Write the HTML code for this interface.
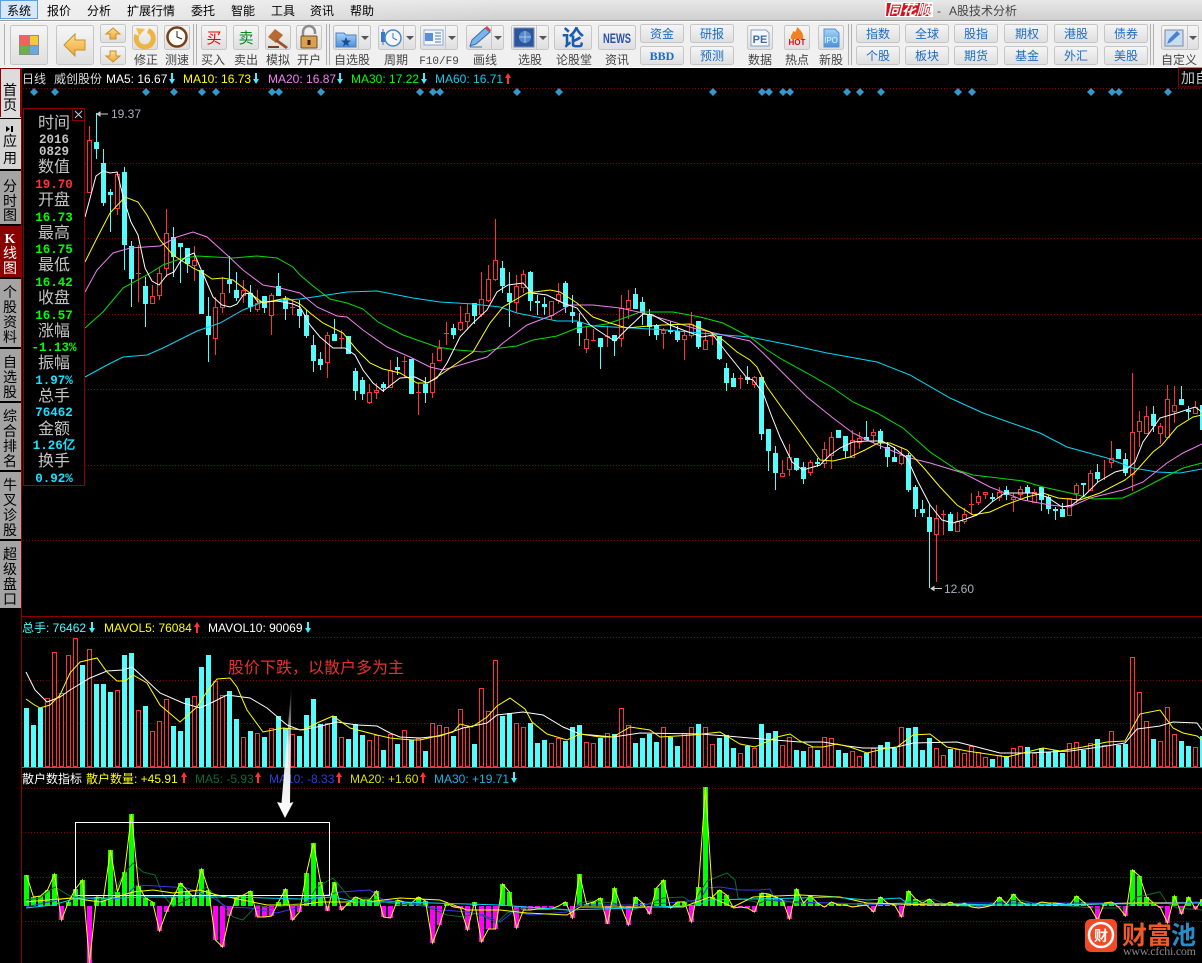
<!DOCTYPE html>
<html lang="zh"><head><meta charset="utf-8"><title>A股技术分析</title>
<style>
html,body{margin:0;padding:0;background:#000;width:1202px;height:963px;overflow:hidden}
svg{display:block}
text{font-family:"Liberation Sans","WenQuanYi Zen Hei","Noto Sans CJK SC",sans-serif;font-size:12px}
.m{fill:#000;font-size:12px}
.l{fill:#444;font-size:12px;text-anchor:middle}
.b{fill:#1a6cc4;font-size:12px;text-anchor:middle}
.tab{fill:#000;font-size:14px;text-anchor:middle}
.k{fill:#c4c4c4;font-size:16px;text-anchor:middle}
.v{font-family:"Liberation Mono","WenQuanYi Zen Hei",monospace;font-weight:bold;font-size:12.5px;text-anchor:middle}
.g{fill:none;stroke:#8c0000;stroke-dasharray:1 2}
.btn{fill:url(#bg);stroke:#c6c6c6}
.ln{fill:none;stroke-width:1}
</style></head><body>
<svg xmlns="http://www.w3.org/2000/svg" width="1202" height="963" viewBox="0 0 1202 963">
<defs>
<linearGradient id="bg" x1="0" y1="0" x2="0" y2="1"><stop offset="0" stop-color="#f6f6f6"/><stop offset="1" stop-color="#dedede"/></linearGradient>
<linearGradient id="mb" x1="0" y1="0" x2="0" y2="1"><stop offset="0" stop-color="#e8e8e8"/><stop offset="1" stop-color="#cfcfcf"/></linearGradient>
<linearGradient id="mh" x1="0" y1="0" x2="1" y2="0"><stop offset="0" stop-color="#f2f2f2"/><stop offset="1" stop-color="#f2f2f2" stop-opacity="0"/></linearGradient>
<linearGradient id="ar" x1="0" y1="0" x2="0" y2="1"><stop offset="0" stop-color="#fff" stop-opacity="0"/><stop offset=".45" stop-color="#fff" stop-opacity=".85"/><stop offset="1" stop-color="#fff"/></linearGradient>
<linearGradient id="gold" x1="0" y1="0" x2="0" y2="1"><stop offset="0" stop-color="#fbe08a"/><stop offset="1" stop-color="#eea63a"/></linearGradient>
<linearGradient id="blue" x1="0" y1="0" x2="0" y2="1"><stop offset="0" stop-color="#a8d4f8"/><stop offset="1" stop-color="#4a90dc"/></linearGradient>
</defs>
<rect width="1202" height="963" fill="#000"/>

<!-- menu bar -->
<rect x="0" y="0" width="1202" height="20" fill="url(#mb)"/>
<rect x="0" y="0" width="500" height="20" fill="url(#mh)"/>
<rect x=".5" y=".5" width="37" height="18" fill="#d8e8f8" stroke="#5aa0e0"/>
<text x="7" y="15" class="m" style="font-size:12px">系统</text>
<text x="47" y="15" class="m">报价</text>
<text x="87" y="15" class="m">分析</text>
<text x="127" y="15" class="m">扩展行情</text>
<text x="191" y="15" class="m">委托</text>
<text x="231" y="15" class="m">智能</text>
<text x="271" y="15" class="m">工具</text>
<text x="310" y="15" class="m">资讯</text>
<text x="350" y="15" class="m">帮助</text>
<rect x="885" y="2" width="48" height="15" fill="#fff"/>
<path d="M887 3h45l-2 13h-44z" fill="#d8101c"/>
<text x="909" y="15" text-anchor="middle" style="font-size:15px;font-weight:bold;font-style:italic;fill:#fff" textLength="44" lengthAdjust="spacingAndGlyphs">同花顺</text>
<text x="937" y="15" style="fill:#444">-</text>
<text x="949" y="15" style="fill:#444">A股技术分析</text>

<!-- toolbar -->
<rect x="0" y="20" width="1202" height="48" fill="#f0f0f0"/>
<path d="M0 20.5H1202" stroke="#9c9c9c"/><path d="M0 21.5H1202" stroke="#fff"/>
<path d="M0 67.5H1202" stroke="#fff"/>
<g fill="none" stroke="#b0b0b0"><path d="M4.5 24V65M193.5 24V65M196.5 24V65M326.5 24V65M329.5 24V65M848.5 24V65M851.5 24V65M1150.5 24V65M1153.5 24V65"/></g>

<rect class="btn" x="10.5" y="25.5" width="37" height="39" rx="2"/>
<rect x="19" y="35" width="20" height="20" fill="#8c8c8c"/>
<rect x="20" y="36" width="9" height="9" fill="#f4605c"/><rect x="30" y="36" width="8" height="9" fill="#f6c93e"/><rect x="20" y="46" width="9" height="8" fill="#6cb04e"/><rect x="30" y="46" width="8" height="8" fill="#6aa8e4"/>

<rect class="btn" x="56.5" y="25.5" width="37" height="39" rx="2"/>
<path d="M64 45l11-11v6h10v10H75v6z" fill="url(#gold)" stroke="#c8902c"/>

<rect class="btn" x="100.5" y="24.5" width="25" height="18" rx="2"/>
<path d="M113 28l7 6h-4v5h-6v-5h-4z" fill="url(#gold)" stroke="#c8902c"/>
<rect class="btn" x="100.5" y="46.5" width="25" height="18" rx="2"/>
<path d="M113 62l7-6h-4v-5h-6v5h-4z" fill="url(#gold)" stroke="#c8902c"/>

<rect class="btn" x="132.5" y="25.5" width="25" height="24" rx="2"/>
<path d="M148 30.500A8.500 8.500 0 1 1 137 35" fill="none" stroke="#eeb442" stroke-width="5"/><path d="M136 28l9 1-6 7z" fill="#f2c050"/>
<rect class="btn" x="164.5" y="25.500" width="25" height="24" rx="2"/>
<circle cx="177" cy="37" r="9.500" fill="#fff" stroke="#7a3e14" stroke-width="2.500"/><path d="M177 31v6l5 2" fill="none" stroke="#222"/>
<text x="146" y="64" class="l">修正</text><text x="177" y="64" class="l">测速</text>

<rect class="btn" x="201.500" y="25.500" width="25" height="24" rx="2"/>
<text x="214" y="43" text-anchor="middle" style="fill:#f00000;font-size:15px">买</text>
<rect class="btn" x="233.500" y="25.500" width="25" height="24" rx="2"/>
<text x="246" y="43" text-anchor="middle" style="fill:#008a20;font-size:15px">卖</text>
<rect class="btn" x="265.500" y="25.500" width="25" height="24" rx="2"/>
<path d="M268 37l7-8 8 6-7 8z" fill="#b86a34"/><path d="M277 39l11 8-2 2-11-8z" fill="#9a5426"/><rect x="268" y="46" width="11" height="2" fill="#8a3a10"/>
<rect class="btn" x="296.500" y="25.500" width="25" height="24" rx="2"/>
<path d="M303 37v-5a6 6 0 0 1 12 0v2" fill="none" stroke="#8c8c8c" stroke-width="2.500"/><rect x="301" y="36" width="16" height="12" rx="1" fill="#d8a050" stroke="#7a5020"/><rect x="307.500" y="40" width="3" height="5" fill="#3c2410"/>
<text x="213" y="64" class="l">买入</text><text x="246" y="64" class="l">卖出</text><text x="278" y="64" class="l">模拟</text><text x="309" y="64" class="l">开户</text>

<!-- dropdown buttons -->
<rect class="btn" x="333.500" y="25.500" width="37" height="24" rx="2"/><path d="M358.500 26V49" stroke="#c6c6c6"/><path d="M361 36h8l-4 4z" fill="#555"/>
<path d="M336 33h8l2 2h10v12h-20z" fill="url(#blue)" stroke="#4a80c0"/><path d="M346 37l1.500 3.500h3.500l-3 2.500 1 3.500-3-2-3 2 1-3.500-3-2.500h3.500z" fill="#1e4c90"/>
<text x="352" y="64" class="l">自选股</text>

<rect class="btn" x="378.500" y="25.500" width="37" height="24" rx="2"/><path d="M403.500 26V49" stroke="#c6c6c6"/><path d="M406 36h8l-4 4z" fill="#555"/>
<rect x="381" y="32" width="4" height="10" fill="#3a78c8"/><path d="M383 29v16" stroke="#3a78c8"/><circle cx="393" cy="38" r="8" fill="#f4f8fc" stroke="#4a88c8" stroke-width="1.500"/><path d="M393 33v5l4 2" fill="none" stroke="#3a78c8"/>
<text x="396" y="64" class="l">周期</text>

<rect class="btn" x="420.500" y="25.500" width="37" height="24" rx="2"/><path d="M445.500 26V49" stroke="#c6c6c6"/><path d="M448 36h8l-4 4z" fill="#555"/>
<rect x="424" y="30" width="19" height="15" fill="#f4f8fc" stroke="#8aa8d0"/><rect x="425" y="33" width="8" height="8" fill="#5a90d8"/><path d="M435 33h6M435 36h6M435 39h6M435 42h6" stroke="#5a78a8"/>
<text x="439" y="64" class="l" style="font-family:'Liberation Mono',monospace;font-size:11px">F10/F9</text>

<rect class="btn" x="466.500" y="25.500" width="37" height="24" rx="2"/><path d="M491.500 26V49" stroke="#c6c6c6"/><path d="M494 36h8l-4 4z" fill="#555"/>
<path d="M470 46l2-6 13-12 5 4-14 12z" fill="#7ab4ec" stroke="#3a6ca8"/><path d="M485 28l5 4 1-2-4-4z" fill="#e04040"/><path d="M470 47h12" stroke="#3a78c0"/>
<text x="485" y="64" class="l">画线</text>

<rect class="btn" x="511.500" y="25.500" width="37" height="24" rx="2"/><path d="M536.500 26V49" stroke="#c6c6c6"/><path d="M539 36h8l-4 4z" fill="#555"/>
<rect x="514" y="28" width="20" height="19" fill="#2a56a0" stroke="#7a8aa8"/><circle cx="525" cy="37" r="6" fill="#5a88c8"/><path d="M525 31v12M519 37h12" stroke="#a8c8e8"/>
<text x="530" y="64" class="l">选股</text>

<rect class="btn" x="554.500" y="25.500" width="37" height="24" rx="2"/>
<text x="573" y="46" text-anchor="middle" style="fill:#1a5cb0;font-size:22px;font-weight:bold">论</text>
<text x="574" y="64" class="l">论股堂</text>

<rect class="btn" x="598.500" y="25.500" width="37" height="24" rx="2"/>
<text x="617" y="43" text-anchor="middle" style="fill:#2a50a8;font-size:14px;font-weight:bold" textLength="28" lengthAdjust="spacingAndGlyphs">NEWS</text>
<text x="617" y="64" class="l">资讯</text>

<rect class="btn" x="640.500" y="24.500" width="43" height="18" rx="2"/><text x="662" y="38" class="b">资金</text>
<rect class="btn" x="640.500" y="46.500" width="43" height="18" rx="2"/><text x="662" y="60" class="b" style="font-family:'Liberation Serif',serif;font-weight:bold">BBD</text>
<rect class="btn" x="690.500" y="24.500" width="43" height="18" rx="2"/><text x="712" y="38" class="b">研报</text>
<rect class="btn" x="690.500" y="46.500" width="43" height="18" rx="2"/><text x="712" y="60" class="b">预测</text>

<rect class="btn" x="747.500" y="25.500" width="25" height="24" rx="2"/>
<path d="M751 30h15l3 3v13h-18z" fill="#f4f8fc" stroke="#8aa0b8"/><text x="760" y="43" text-anchor="middle" style="fill:#3a6ca8;font-size:11px;font-weight:bold">PE</text>
<text x="760" y="64" class="l">数据</text>
<rect class="btn" x="784.500" y="25.500" width="25" height="24" rx="2"/>
<path d="M797 27c5 4 7 8 6 12h-12c-1-4 2-5 2-8 2 1 3 2 4-4z" fill="#f08020"/><text x="797" y="45" text-anchor="middle" style="fill:#d81010;font-size:8px;font-weight:bold">HOT</text>
<text x="797" y="64" class="l">热点</text>
<rect class="btn" x="818.500" y="25.500" width="25" height="24" rx="2"/>
<path d="M824 29h11l4 4v14h-15z" fill="url(#blue)" stroke="#5a90d0"/><text x="831" y="43" text-anchor="middle" style="fill:#dff;font-size:8px">IPO</text>
<text x="831" y="64" class="l">新股</text>

<rect class="btn" x="856.500" y="24.500" width="43" height="18" rx="2"/><text x="878" y="38" class="b">指数</text>
<rect class="btn" x="856.500" y="46.500" width="43" height="18" rx="2"/><text x="878" y="60" class="b">个股</text>
<rect class="btn" x="905.500" y="24.500" width="43" height="18" rx="2"/><text x="927" y="38" class="b">全球</text>
<rect class="btn" x="905.500" y="46.500" width="43" height="18" rx="2"/><text x="927" y="60" class="b">板块</text>
<rect class="btn" x="954.500" y="24.500" width="43" height="18" rx="2"/><text x="976" y="38" class="b">股指</text>
<rect class="btn" x="954.500" y="46.500" width="43" height="18" rx="2"/><text x="976" y="60" class="b">期货</text>
<rect class="btn" x="1004.500" y="24.500" width="43" height="18" rx="2"/><text x="1027" y="38" class="b">期权</text>
<rect class="btn" x="1004.500" y="46.500" width="43" height="18" rx="2"/><text x="1027" y="60" class="b">基金</text>
<rect class="btn" x="1054.500" y="24.500" width="43" height="18" rx="2"/><text x="1076" y="38" class="b">港股</text>
<rect class="btn" x="1054.500" y="46.500" width="43" height="18" rx="2"/><text x="1076" y="60" class="b">外汇</text>
<rect class="btn" x="1104.500" y="24.500" width="43" height="18" rx="2"/><text x="1126" y="38" class="b">债券</text>
<rect class="btn" x="1104.500" y="46.500" width="43" height="18" rx="2"/><text x="1126" y="60" class="b">美股</text>

<rect class="btn" x="1161.500" y="25.500" width="37" height="24" rx="2"/><path d="M1187.500 26V49" stroke="#c6c6c6"/><path d="M1189 36h8l-4 4z" fill="#555"/>
<rect x="1165" y="30" width="18" height="16" fill="#c8dcf4" stroke="#7a8aa0"/><path d="M1167 44l2-5 8-8 3 3-9 8z" fill="#4a80d0"/>
<text x="1179" y="64" class="l">自定义</text>

<!-- left tabs -->
<path d="M21.500 68V963M21 616.500H1202" stroke="#8c0000" fill="none"/>
<rect x="0" y="68" width="21" height="50" fill="#dcdcdc"/><path d="M.5 117V68.500H20.500V117" fill="none" stroke="#8c0000"/>
<rect x="0" y="119" width="21" height="50" fill="#d4d4d4"/>
<path d="M6 126l4 3-4 3zM11 126h2v6h-2z" fill="#000"/>
<rect x="0" y="171" width="21" height="53" fill="#a4a4a4"/>
<rect x="0" y="226" width="21" height="51" fill="#8a0000"/>
<rect x="0" y="279" width="21" height="68" fill="#a4a4a4"/>
<rect x="0" y="349" width="21" height="52" fill="#a4a4a4"/>
<rect x="0" y="403" width="21" height="67" fill="#a4a4a4"/>
<rect x="0" y="472" width="21" height="67" fill="#a4a4a4"/>
<rect x="0" y="541" width="21" height="67" fill="#a4a4a4"/>
<g class="tab">
<text class="tab" x="10" y="95">首</text><text class="tab" x="10" y="110">页</text>
<text class="tab" x="10" y="146">应</text><text class="tab" x="10" y="163">用</text>
<text class="tab" x="10" y="191">分</text><text class="tab" x="10" y="206">时</text><text class="tab" x="10" y="220">图</text>
<text class="tab" x="10" y="243" style="fill:#fff;font-family:'Liberation Serif',serif;font-weight:bold">K</text><text class="tab" x="10" y="258" style="fill:#fff">线</text><text class="tab" x="10" y="273" style="fill:#fff">图</text>
<text class="tab" x="10" y="297">个</text><text class="tab" x="10" y="312">股</text><text class="tab" x="10" y="327">资</text><text class="tab" x="10" y="342">料</text>
<text class="tab" x="10" y="367">自</text><text class="tab" x="10" y="382">选</text><text class="tab" x="10" y="397">股</text>
<text class="tab" x="10" y="421">综</text><text class="tab" x="10" y="436">合</text><text class="tab" x="10" y="451">排</text><text class="tab" x="10" y="466">名</text>
<text class="tab" x="10" y="490">牛</text><text class="tab" x="10" y="505">叉</text><text class="tab" x="10" y="520">诊</text><text class="tab" x="10" y="535">股</text>
<text class="tab" x="10" y="559">超</text><text class="tab" x="10" y="574">级</text><text class="tab" x="10" y="589">盘</text><text class="tab" x="10" y="604">口</text>
</g>

<!-- main header -->
<rect x="1178.500" y="68" width="24" height="19" fill="#000" stroke="#8c0000"/>
<text x="1181" y="83" style="fill:#ccc;font-size:14px">加自</text>
<text x="22" y="83" style="fill:#ddd">日线</text>
<text x="54" y="83" style="fill:#ddd">威创股份</text>
<text x="106" y="83" style="fill:#fff">MA5: 16.67</text><path d="M171 73h2v6h2l-3 5-3-5h2z" fill="#4ef"/>
<text x="183" y="83" style="fill:#ff0">MA10: 16.73</text><path d="M255 73h2v6h2l-3 5-3-5h2z" fill="#4ef"/>
<text x="268" y="83" style="fill:#f080f8">MA20: 16.87</text><path d="M339 73h2v6h2l-3 5-3-5h2z" fill="#4ef"/>
<text x="351" y="83" style="fill:#0f0">MA30: 17.22</text><path d="M423 73h2v6h2l-3 5-3-5h2z" fill="#4ef"/>
<text x="435" y="83" style="fill:#1cc8ee">MA60: 16.71</text><path d="M507 84h2v-6h2l-3-5-3 5h2z" fill="#f33"/>

<!-- grid -->
<path class="g" d="M23 88.500H1202M85 163.500H1202M85 238.500H1202M85 314.500H1202M85 389.500H1202M85 465.500H1202M23 540.500H1202M22 637.500H1202M22 680.500H1202M22 723.500H1202M22 788.500H1202M22 832.500H1202M22 877.500H1202M22 921.500H1202"/>

<!-- diamonds -->
<path fill="#3399cc" d="M34 88l4 4-4 4-4-4zM55 88l4 4-4 4-4-4zM146 88l4 4-4 4-4-4zM174 88l4 4-4 4-4-4zM202 88l4 4-4 4-4-4zM216 88l4 4-4 4-4-4zM272 88l4 4-4 4-4-4zM279 88l4 4-4 4-4-4zM321 88l4 4-4 4-4-4zM420 88l4 4-4 4-4-4zM433 88l4 4-4 4-4-4zM440 88l4 4-4 4-4-4zM517 88l4 4-4 4-4-4zM559 88l4 4-4 4-4-4zM713 88l4 4-4 4-4-4zM762 88l4 4-4 4-4-4zM769 88l4 4-4 4-4-4zM783 88l4 4-4 4-4-4zM790 88l4 4-4 4-4-4zM847 88l4 4-4 4-4-4zM860 88l4 4-4 4-4-4zM881 88l4 4-4 4-4-4zM958 88l4 4-4 4-4-4zM972 88l4 4-4 4-4-4zM1091 88l4 4-4 4-4-4zM1112 88l4 4-4 4-4-4zM1119 88l4 4-4 4-4-4zM1168 88l4 4-4 4-4-4z"/>

<!-- candles cyan wicks -->
<path fill="none" stroke="#55fcfc" d="M96.500 113V159M103.500 149V206M110.500 189V232M124.500 167V270M131.500 241V307M145.500 277V327M173.500 227V277M180.500 243V283M187.500 248V273M208.500 297V362M229.500 256V293M236.500 272V301M250.500 285V312M264.500 296V313M278.500 273V296M285.500 296V320M299.500 300V328M306.500 310V338M313.500 335V372M320.500 352V370M334.500 319V341M355.500 368V400M362.500 377V400M383.500 382V392M397.500 357V375M425.500 377V403M453.500 324V339M474.500 303V324M502.500 261V293M509.500 272V327M530.500 271V311M537.500 295V315M544.500 297V315M565.500 281V313M572.500 295V323M579.500 313V346M600.500 338V369M614.500 335V356M635.500 288V309M642.500 297V325M649.500 309V336M656.500 324V340M670.500 321V334M677.500 326V342M698.500 321V349M719.500 336V360M726.500 363V391M733.500 373V387M747.500 366V384M761.500 377V440M768.500 429V471M775.500 446V490M796.500 458V471M803.500 462V484M817.500 458V467M845.500 436V458M866.500 421V440M880.500 429V449M887.500 442V467M894.500 447V462M908.500 453V492M915.500 485V517M922.500 500V517M929.500 504V588M950.500 512V531M992.500 493V502M1006.500 486V500M1027.500 485V501M1041.500 486V511M1048.500 495V514M1055.500 507V520M1062.500 503V517M1083.500 484V497M1097.500 464V482M1125.500 453V476M1153.500 406V432M1181.500 386V405M1188.500 406V419"/>
<!-- candles cyan bodies -->
<path fill="none" stroke="#55fcfc" stroke-width="5" d="M96.500 142V149M103.500 163V203M110.500 192V195M124.500 172V245M131.500 246V279M145.500 286V304M173.500 237V257M180.500 243V247M187.500 248V264M201.500 270V314M208.500 316V335M229.500 280V284M236.500 290V298M250.500 293V307M264.500 296V308M278.500 286V296M285.500 299V309M299.500 309V316M306.500 315V336M313.500 345V361M320.500 359V365M334.500 334V341M348.500 336V354M355.500 371V391M362.500 380V394M383.500 384V388M397.500 367V370M411.500 359V394M425.500 384V393M453.500 328V335M474.500 303V316M502.500 268V286M509.500 293V302M530.500 272V301M537.500 301V303M544.500 304V307M565.500 283V307M572.500 312V316M579.500 322V333M600.500 338V347M614.500 335V341M635.500 294V309M642.500 302V313M649.500 314V327M656.500 325V335M670.500 330V332M677.500 331V340M698.500 321V347M719.500 336V359M726.500 368V383M733.500 378V387M747.500 377V380M761.500 377V434M768.500 429V451M775.500 453V473M796.500 458V470M803.500 467V479M817.500 462V464M838.500 430V438M845.500 436V451M866.500 437V440M880.500 431V443M887.500 447V457M894.500 457V462M908.500 455V490M915.500 487V509M922.500 509V513M929.500 517V532M950.500 514V531M992.500 497V499M1006.500 490V495M1027.500 487V493M1041.500 487V500M1048.500 497V509M1055.500 509V511M1062.500 509V517M1083.500 483V485M1097.500 472V479M1118.500 449V459M1125.500 459V473M1153.500 414V426M1181.500 399V405M1188.500 410V412M1202.500 405V430"/>
<!-- candles red wicks -->
<path fill="none" stroke="#f33" d="M89.500 126V192M117.500 172V215M138.500 245V302M136 273.500h5M152.500 285V303M159.500 268V300M166.500 209V277M194.500 246V281M215.500 297V355M222.500 277V313M243.500 280V303M257.500 290V312M271.500 293V335M292.500 300V315M290 307.500h5M327.500 332V378M341.500 330V348M339 338.500h5M369.500 384V404M376.500 383V399M390.500 360V387M404.500 356V377M402 361.500h5M418.500 383V415M416 392.500h5M432.500 353V398M439.500 340V360M446.500 322V345M444 333.500h5M460.500 306V331M467.500 303V330M481.500 272V317M488.500 265V302M495.500 219V281M516.500 275V313M523.500 270V293M551.500 301V320M558.500 283V304M586.500 326V353M593.500 329V341M591 340.500h5M607.500 326V347M605 336.500h5M621.500 295V347M628.500 290V319M663.500 328V349M684.500 332V360M691.500 312V338M705.500 332V349M712.500 332V345M710 336.500h5M740.500 375V389M738 378.500h5M754.500 376V388M782.500 460V476M789.500 444V476M810.500 460V476M824.500 442V468M831.500 432V469M852.500 430V457M859.500 432V449M873.500 429V443M901.500 447V465M936.500 505V582M943.500 510V535M941 514.500h5M957.500 512V531M964.500 508V524M971.500 493V515M969 504.500h5M978.500 491V505M985.500 492V499M999.500 487V501M1013.500 493V512M1020.500 486V500M1034.500 489V502M1069.500 498V515M1076.500 483V503M1090.500 470V490M1104.500 460V480M1111.500 441V468M1132.500 373V491M1139.500 411V447M1146.500 406V433M1160.500 423V444M1167.500 385V437M1174.500 386V423M1195.500 401V413"/>
<!-- candles red bodies -->
<path fill="#000" stroke="#f33" d="M87.500 140.500h4v52h-4zM115.500 174.500h4v34h-4zM150.500 296.500h4v7h-4zM157.500 273.500h4v22h-4zM164.500 233.500h4v35h-4zM192.500 260.500h4v5h-4zM213.500 307.500h4v31h-4zM220.500 293.500h4v14h-4zM241.500 290.500h4v5h-4zM255.500 303.500h4v6h-4zM269.500 295.500h4v20h-4zM325.500 335.500h4v27h-4zM367.500 392.500h4v10h-4zM374.500 390.500h4v2h-4zM388.500 370.500h4v17h-4zM430.500 363.500h4v29h-4zM437.500 348.500h4v12h-4zM458.500 322.500h4v7h-4zM465.500 313.500h4v8h-4zM479.500 299.500h4v15h-4zM486.500 279.500h4v21h-4zM493.500 260.500h4v19h-4zM514.500 286.500h4v16h-4zM521.500 274.500h4v13h-4zM549.500 301.500h4v14h-4zM556.500 294.500h4v6h-4zM584.500 339.500h4v9h-4zM619.500 308.500h4v30h-4zM626.500 300.500h4v8h-4zM661.500 330.500h4v3h-4zM682.500 335.500h4v4h-4zM689.500 324.500h4v11h-4zM703.500 340.500h4v9h-4zM752.500 377.500h4v7h-4zM780.500 473.500h4v3h-4zM787.500 457.500h4v12h-4zM808.500 462.500h4v10h-4zM822.500 449.500h4v14h-4zM829.500 437.500h4v18h-4zM850.500 440.500h4v17h-4zM857.500 438.500h4v4h-4zM871.500 432.500h4v3h-4zM899.500 455.500h4v8h-4zM934.500 518.500h4v16h-4zM955.500 521.500h4v10h-4zM962.500 514.500h4v7h-4zM976.500 496.500h4v6h-4zM983.500 492.500h4v2h-4zM997.500 492.500h4v5h-4zM1011.500 497.500h4v2h-4zM1018.500 489.500h4v5h-4zM1032.500 492.500h4v10h-4zM1067.500 498.500h4v17h-4zM1074.500 485.500h4v8h-4zM1088.500 473.500h4v17h-4zM1109.500 458.500h4v4h-4zM1130.500 432.500h4v42h-4zM1137.500 421.500h4v10h-4zM1144.500 416.500h4v17h-4zM1158.500 426.500h4v7h-4zM1165.500 399.500h4v38h-4zM1172.500 405.500h4v6h-4zM1193.500 407.500h4v6h-4z"/>

<!-- MA lines main -->
<polyline class="ln" stroke="#00d8f8" points="85,377 107,365 123,357 147,355 163,348 197,331 220,323 243,310 263,302 300,299 327,295 347,292 377,291 413,298 440,302 473,304 500,307 517,313 557,321 577,321 593,326 633,328 667,330 700,333 750,337 790,345 827,353 877,362 910,375 950,398 983,413 1017,425 1040,433 1067,447 1107,458 1133,468 1157,472 1180,473 1202,469"/>
<polyline class="ln" stroke="#00e000" points="85,328 103,312 123,288 147,275 163,265 180,259 197,256 233,258 257,256 277,258 293,267 300,275 313,286 330,299 347,303 363,309 378,322 403,335 437,347 457,350 483,352 500,348 517,346 533,340 557,336 577,328 607,324 627,317 640,312 673,312 700,317 723,323 750,337 767,350 783,360 807,373 833,388 853,402 877,413 903,428 930,452 957,470 973,475 1023,481 1043,487 1070,493 1093,499 1123,498 1140,490 1163,478 1183,468 1202,463"/>
<polyline class="ln" stroke="#f080f0" points="85,292 97,270 113,253 130,248 160,246 177,237 193,232 207,237 227,255 243,270 263,285 280,288 300,293 317,307 337,316 347,317 363,330 387,347 410,357 430,367 443,370 467,363 487,357 503,343 527,325 553,315 570,305 593,305 620,308 643,313 667,320 693,328 723,335 750,341 763,353 780,370 807,397 833,418 853,433 867,440 890,450 910,458 930,463 963,473 990,487 1023,500 1050,505 1070,507 1090,498 1123,490 1143,482 1167,463 1183,453 1202,444"/>
<polyline class="ln" stroke="#ff0" points="85,262 97,238 110,213 125,197 138,202 147,215 160,240 173,255 193,268 203,273 212,279 223,278 233,280 250,293 263,303 277,300 287,298 300,304 310,313 323,323 343,333 357,350 370,363 383,369 400,373 417,383 428,383 443,373 473,352 490,323 503,307 527,293 550,290 560,292 577,303 593,317 610,323 627,328 637,327 663,325 690,324 710,332 723,340 737,352 750,360 757,367 767,387 782,408 797,428 820,460 833,461 850,457 865,450 878,443 890,443 907,450 923,467 940,487 957,505 973,515 990,512 1005,505 1027,497 1043,493 1058,498 1080,500 1100,493 1125,480 1135,472 1153,452 1162,445 1177,427 1193,417 1202,415"/>
<polyline class="ln" stroke="#fff" points="85,217 96,176 103,171 110,173 117,172 124,200 131,222 138,235 145,268 152,281 159,285 167,275 174,272 180,262 187,256 194,253 200,267 207,283 213,297 222,305 230,307 237,304 244,294 251,293 258,302 265,302 277,301 283,302 293,304 300,307 310,325 320,337 333,348 345,348 355,355 363,370 373,383 383,391 400,378 415,377 427,383 437,378 447,363 460,337 473,323 487,310 497,292 508,285 523,283 532,293 547,295 563,303 577,308 590,325 605,335 615,341 628,328 643,314 653,315 670,325 683,330 702,337 713,335 727,353 747,378 753,380 763,393 772,417 780,437 792,462 803,470 820,465 830,455 840,448 853,442 867,441 882,441 893,447 907,458 917,480 930,505 942,520 953,523 963,520 977,515 992,502 1005,493 1033,493 1047,497 1062,507 1072,505 1085,495 1098,482 1115,472 1127,469 1135,462 1143,442 1160,418 1177,413 1195,407 1202,412"/>

<!-- info box -->
<rect x="23.500" y="108.500" width="61" height="377" fill="#000" stroke="#8c0000" stroke-width="1"/>
<rect x="72.500" y="108.500" width="12" height="12" fill="#000" stroke="#8c0000"/>
<path d="M75 111l7 7M82 111l-7 7" stroke="#ccc" fill="none"/>
<text class="k" x="54" y="128">时间</text>
<text class="v" x="54" y="143" style="fill:#c4c4c4">2016</text>
<text class="v" x="54" y="155" style="fill:#c4c4c4">0829</text>
<text class="k" x="54" y="172">数值</text>
<text class="v" x="54" y="188" style="fill:#f33">19.70</text>
<text class="k" x="54" y="205">开盘</text>
<text class="v" x="54" y="221" style="fill:#0f0">16.73</text>
<text class="k" x="54" y="238">最高</text>
<text class="v" x="54" y="253" style="fill:#0f0">16.75</text>
<text class="k" x="54" y="270">最低</text>
<text class="v" x="54" y="286" style="fill:#0f0">16.42</text>
<text class="k" x="54" y="303">收盘</text>
<text class="v" x="54" y="319" style="fill:#0f0">16.57</text>
<text class="k" x="54" y="336">涨幅</text>
<text class="v" x="54" y="351" style="fill:#0f0">-1.13%</text>
<text class="k" x="54" y="368">振幅</text>
<text class="v" x="54" y="384" style="fill:#1de0ff">1.97%</text>
<text class="k" x="54" y="401">总手</text>
<text class="v" x="54" y="416" style="fill:#1de0ff">76462</text>
<text class="k" x="54" y="434">金额</text>
<text class="v" x="54" y="449" style="fill:#1de0ff">1.26亿</text>
<text class="k" x="54" y="466">换手</text>
<text class="v" x="54" y="482" style="fill:#1de0ff">0.92%</text>

<!-- extreme labels -->
<path d="M97 114h11M97 114l3-2v4z" stroke="#ccc" fill="#ccc"/>
<text x="111" y="118" style="fill:#a8b0b8">19.37</text>
<path d="M931 588.500h11M931 588.500l3-2v4z" stroke="#ccc" fill="#ccc"/>
<text x="944" y="593" style="fill:#a8b0b8">12.60</text>

<!-- volume panel header -->
<text x="22" y="632" style="fill:#4ff">总手: 76462</text><path d="M91 622h2v6h2l-3 5-3-5h2z" fill="#4ef"/>
<text x="104" y="632" style="fill:#ff0">MAVOL5: 76084</text><path d="M196 633h2v-6h2l-3-5-3 5h2z" fill="#f33"/>
<text x="208" y="632" style="fill:#fff">MAVOL10: 90069</text><path d="M307 622h2v6h2l-3 5-3-5h2z" fill="#4ef"/>

<!-- volume cyan -->
<path fill="none" stroke="#55fcfc" stroke-width="5" d="M26.500 708V767M33.500 725V767M40.500 708V767M82.500 665V767M96.500 684V767M103.500 684V767M110.500 692V767M124.500 655V767M131.500 653V767M145.500 706V767M173.500 726V767M180.500 731V767M187.500 698V767M201.500 667V767M208.500 655V767M229.500 691V767M236.500 719V767M250.500 731V767M264.500 737V767M278.500 716V767M285.500 728V767M299.500 736V767M306.500 715V767M313.500 699V767M320.500 724V767M334.500 716V767M348.500 739V767M355.500 724V767M362.500 735V767M383.500 750V767M397.500 744V767M411.500 740V767M425.500 751V767M453.500 736V767M474.500 744V767M502.500 716V767M509.500 713V767M530.500 723V767M537.500 743V767M544.500 740V767M565.500 741V767M572.500 727V767M579.500 725V767M600.500 738V767M614.500 734V767M635.500 743V767M642.500 738V767M649.500 734V767M656.500 742V767M670.500 737V767M677.500 746V767M698.500 724V767M719.500 738V767M726.500 735V767M733.500 748V767M747.500 746V767M761.500 724V767M768.500 733V767M775.500 731V767M796.500 750V767M803.500 751V767M817.500 750V767M838.500 750V767M845.500 753V767M866.500 753V767M880.500 745V767M887.500 742V767M894.500 748V767M908.500 728V767M915.500 727V767M922.500 750V767M929.500 738V767M950.500 749V767M992.500 759V767M1006.500 756V767M1027.500 747V767M1041.500 748V767M1048.500 752V767M1055.500 750V767M1062.500 753V767M1083.500 750V767M1097.500 739V767M1118.500 745V767M1125.500 744V767M1153.500 739V767M1181.500 741V767M1188.500 746V767M1202.500 736V767"/>
<!-- volume red -->
<path fill="#000" stroke="#f33" d="M45.500 698.500h4v68h-4zM52.500 652.500h4v114h-4zM59.500 693.500h4v73h-4zM66.500 655.500h4v111h-4zM73.500 638.500h4v128h-4zM87.500 649.500h4v117h-4zM115.500 690.500h4v76h-4zM136.500 710.500h4v56h-4zM150.500 731.500h4v35h-4zM157.500 721.500h4v45h-4zM164.500 699.500h4v67h-4zM192.500 696.500h4v70h-4zM213.500 681.500h4v85h-4zM220.500 695.500h4v71h-4zM241.500 737.500h4v29h-4zM255.500 733.500h4v33h-4zM269.500 728.500h4v38h-4zM290.500 734.500h4v32h-4zM325.500 723.500h4v43h-4zM339.500 737.500h4v29h-4zM367.500 740.500h4v26h-4zM374.500 735.500h4v31h-4zM388.500 734.500h4v32h-4zM402.500 730.500h4v36h-4zM416.500 738.500h4v28h-4zM430.500 723.500h4v43h-4zM437.500 725.500h4v41h-4zM444.500 727.500h4v39h-4zM458.500 709.500h4v57h-4zM465.500 727.500h4v39h-4zM479.500 688.500h4v78h-4zM486.500 711.500h4v55h-4zM493.500 660.500h4v106h-4zM514.500 723.500h4v43h-4zM521.500 727.500h4v39h-4zM549.500 743.500h4v23h-4zM556.500 738.500h4v28h-4zM584.500 742.500h4v24h-4zM591.500 743.500h4v23h-4zM605.500 733.500h4v33h-4zM619.500 708.500h4v58h-4zM626.500 725.500h4v41h-4zM661.500 727.500h4v39h-4zM682.500 733.500h4v33h-4zM689.500 727.500h4v39h-4zM703.500 727.500h4v39h-4zM710.500 744.500h4v22h-4zM738.500 753.500h4v13h-4zM752.500 748.500h4v18h-4zM780.500 745.500h4v21h-4zM787.500 737.500h4v29h-4zM808.500 747.500h4v19h-4zM822.500 737.500h4v29h-4zM829.500 738.500h4v28h-4zM850.500 751.500h4v15h-4zM857.500 756.500h4v10h-4zM871.500 748.500h4v18h-4zM899.500 727.500h4v39h-4zM934.500 748.500h4v18h-4zM941.500 755.500h4v11h-4zM955.500 749.500h4v17h-4zM962.500 753.500h4v13h-4zM969.500 746.500h4v20h-4zM976.500 752.500h4v14h-4zM983.500 757.500h4v9h-4zM997.500 755.500h4v11h-4zM1011.500 748.500h4v18h-4zM1018.500 746.500h4v20h-4zM1032.500 753.500h4v13h-4zM1067.500 743.500h4v23h-4zM1074.500 742.500h4v24h-4zM1088.500 743.500h4v23h-4zM1102.500 745.500h4v21h-4zM1109.500 731.500h4v35h-4zM1130.500 657.500h4v109h-4zM1137.500 692.500h4v74h-4zM1144.500 721.500h4v45h-4zM1158.500 741.500h4v25h-4zM1165.500 707.500h4v59h-4zM1172.500 734.500h4v32h-4zM1193.500 747.500h4v19h-4z"/>
<path d="M22 767.500H1202" stroke="#f33"/>
<polyline class="ln" stroke="#fff" points="26,672 35,690 47,702 60,697 70,690 90,678 107,671 123,670 132,667 143,677 160,693 183,703 200,708 213,702 227,695 250,698 267,708 287,725 300,730 317,727 337,722 357,725 377,726 390,733 400,737 420,738 440,736 463,728 487,723 497,715 523,712 543,715 563,727 580,734 613,737 640,733 700,734 727,736 750,738 800,742 823,742 847,746 863,748 893,748 913,743 957,742 977,747 1000,753 1027,753 1070,751 1100,747 1125,743 1137,729 1160,726 1173,722 1197,723 1202,730"/>
<polyline class="ln" stroke="#ff0" points="26,699 33,704 40,708 50,705 60,695 70,673 80,662 97,658 107,672 117,681 125,681 133,675 147,683 160,705 180,722 197,707 208,690 217,679 230,678 237,687 247,710 263,732 283,728 303,730 317,723 333,716 350,728 377,735 390,738 400,739 413,740 420,740 433,737 453,732 460,724 472,727 487,717 497,706 510,698 525,709 532,722 547,734 567,740 580,734 600,737 613,737 630,727 650,730 660,737 693,735 720,732 740,744 755,747 777,737 790,734 800,741 813,747 823,747 837,744 850,747 867,753 887,748 897,747 913,735 930,734 947,747 967,751 1007,757 1027,752 1043,748 1060,751 1083,747 1107,742 1125,741 1140,714 1160,710 1173,728 1183,733 1197,736 1202,740"/>

<!-- lower header -->
<text x="22" y="783" style="fill:#fff">散户数指标</text>
<text x="86" y="783" style="fill:#ff0">散户数量: +45.91</text><path d="M183 783h2v-6h2l-3-5-3 5h2z" fill="#f33"/>
<text x="195" y="783" style="fill:#0c6a34">MA5: -5.93</text><path d="M257 783h2v-6h2l-3-5-3 5h2z" fill="#f33"/>
<text x="269" y="783" style="fill:#2840d8">MA10: -8.33</text><path d="M338 783h2v-6h2l-3-5-3 5h2z" fill="#f33"/>
<text x="350" y="783" style="fill:#dd0">MA20: +1.60</text><path d="M422 783h2v-6h2l-3-5-3 5h2z" fill="#f33"/>
<text x="434" y="783" style="fill:#1cb0e8">MA30: +19.71</text><path d="M513 772h2v6h2l-3 5-3-5h2z" fill="#4ef"/>

<!-- lower histogram -->
<path fill="none" stroke="#0f0" stroke-width="5" d="M26.500 875V906M33.500 897V906M40.500 896V906M47.500 890V906M54.500 874V906M68.500 902V906M75.500 889V906M82.500 880V906M96.500 897V906M103.500 898V906M110.500 850V906M117.500 892V906M124.500 872V906M131.500 814V906M138.500 886V906M145.500 898V906M152.500 902V906M173.500 897V906M180.500 883V906M187.500 891V906M194.500 898V906M201.500 869V906M208.500 890V906M236.500 897V906M243.500 895V906M250.500 891V906M278.500 902V906M285.500 889V906M306.500 873V906M313.500 843V906M320.500 882V906M334.500 882V906M348.500 903V906M355.500 897V906M362.500 900V906M369.500 900V906M376.500 891V906M397.500 900V906M404.500 902V906M411.500 903V906M418.500 897V906M425.500 901V906M446.500 903V906M474.500 902V906M502.500 884V906M509.500 892V906M565.500 902V906M579.500 874V906M586.500 904V906M593.500 902V906M600.500 898V906M614.500 888V906M635.500 897V906M642.500 903V906M656.500 888V906M663.500 880V906M677.500 902V906M684.500 902V906M698.500 887V906M705.500 787V906M712.500 897V906M719.500 890V906M726.500 895V906M761.500 893V906M768.500 894V906M775.500 897V906M782.500 900V906M796.500 889V906M803.500 903V906M810.500 896V906M817.500 903V906M831.500 902V906M838.500 903V906M845.500 903V906M859.500 903V906M866.500 903V906M880.500 897V906M887.500 903V906M894.500 903V906M908.500 891V906M915.500 899V906M922.500 903V906M929.500 899V906M936.500 903V906M943.500 903V906M950.500 902V906M964.500 903V906M992.500 903V906M999.500 897V906M1006.500 904V906M1013.500 894V906M1020.500 902V906M1027.500 903V906M1034.500 903V906M1041.500 902V906M1048.500 903V906M1055.500 903V906M1062.500 904V906M1069.500 903V906M1076.500 896V906M1083.500 902V906M1104.500 903V906M1111.500 902V906M1132.500 870V906M1139.500 876V906M1146.500 897V906M1153.500 903V906M1174.500 896V906M1188.500 897V906M1202.500 899V906"/>
<path fill="none" stroke="#f0f" stroke-width="5" d="M61.500 906V920M89.500 906V963M159.500 906V931M166.500 906V912M215.500 906V940M222.500 906V947M229.500 906V916M257.500 906V917M264.500 906V917M271.500 906V916M292.500 906V920M299.500 906V912M327.500 906V911M341.500 906V910M383.500 906V917M390.500 906V918M432.500 906V943M439.500 906V925M453.500 906V907M460.500 906V908M467.500 906V930M481.500 906V942M488.500 906V929M495.500 906V929M516.500 906V928M523.500 906V910M530.500 906V910M537.500 906V909M544.500 906V909M551.500 906V909M572.500 906V918M607.500 906V924M621.500 906V908M628.500 906V925M649.500 906V914M670.500 906V908M691.500 906V922M733.500 906V908M740.500 906V907M747.500 906V908M754.500 906V912M789.500 906V919M824.500 906V907M852.500 906V907M873.500 906V912M901.500 906V917M971.500 906V907M978.500 906V908M985.500 906V907M1090.500 906V908M1097.500 906V920M1118.500 906V907M1125.500 906V916M1160.500 906V908M1167.500 906V923M1181.500 906V914M1195.500 906V909"/>
<polyline class="ln" stroke="#0c6a34" points="26,900 40,898 47,892 55,887 70,896 83,900 100,902 113,895 123,875 133,863 143,872 155,875 163,895 173,907 190,898 207,887 220,902 233,917 243,920 257,905 270,908 290,905 307,902 317,887 333,878 350,898 367,898 400,905 417,903 430,908 447,915 463,917 477,913 497,923 507,913 523,908 547,908 573,910 580,903 590,901 613,903 633,910 663,898 683,897 693,903 707,881 727,873 735,880 738,898 760,903 767,900 800,903 833,903 867,905 900,903 910,902 933,899 947,905 980,907 1000,902 1020,900 1033,903 1093,908 1127,908 1137,897 1160,892 1167,903 1177,908 1202,910"/>
<polyline class="ln" stroke="#3838e8" points="26,907 67,898 80,897 100,900 123,898 137,885 157,886 187,888 200,893 213,898 227,907 250,908 277,913 300,907 317,897 340,892 370,890 383,900 400,902 430,907 443,910 467,912 483,915 500,922 513,912 533,915 567,912 580,905 630,905 667,903 700,900 707,888 720,887 740,890 760,890 770,889 775,900 800,902 833,903 900,905 967,903 1067,903 1133,903 1202,902"/>
<polyline class="ln" stroke="#ff0" points="26,902 47,900 73,898 100,902 133,892 153,890 173,893 200,890 217,895 233,898 267,905 300,905 320,902 367,902 400,898 440,900 467,910 500,910 527,913 567,915 580,907 633,907 683,907 710,897 733,907 753,897 800,895 840,897 867,903 933,905 980,905 1067,905 1133,903 1202,903"/>
<polyline class="ln" stroke="#ff0" points="26.500,875 33.500,897 40.500,896 47.500,890 54.500,874 61.500,920 68.500,902 75.500,889 82.500,880 89.500,963 96.500,897 103.500,898 110.500,850 117.500,892 124.500,872 131.500,814 138.500,886 145.500,898 152.500,902 159.500,931 166.500,912 173.500,897 180.500,883 187.500,891 194.500,898 201.500,869 208.500,890 215.500,940 222.500,947 229.500,916 236.500,897 243.500,895 250.500,891 257.500,917 264.500,917 271.500,916 278.500,902 285.500,889 292.500,920 299.500,912 306.500,873 313.500,843 320.500,882 327.500,911 334.500,882 341.500,910 348.500,903 355.500,897 362.500,900 369.500,900 376.500,891 383.500,917 390.500,918 397.500,900 404.500,902 411.500,903 418.500,897 425.500,901 432.500,943 439.500,925 446.500,903 453.500,907 460.500,908 467.500,930 474.500,902 481.500,942 488.500,929 495.500,929 502.500,884 509.500,892 516.500,928 523.500,910 530.500,910 537.500,909 544.500,909 551.500,909 558.500,906 565.500,902 572.500,918 579.500,874 586.500,904 593.500,902 600.500,898 607.500,924 614.500,888 621.500,908 628.500,925 635.500,897 642.500,903 649.500,914 656.500,888 663.500,880 670.500,908 677.500,902 684.500,902 691.500,922 698.500,887 705.500,787 712.500,897 719.500,890 726.500,895 733.500,908 740.500,907 747.500,908 754.500,912 761.500,893 768.500,894 775.500,897 782.500,900 789.500,919 796.500,889 803.500,903 810.500,896 817.500,903 824.500,907 831.500,902 838.500,905 845.500,905 852.500,907 859.500,906 866.500,905 873.500,912 880.500,897 887.500,903 894.500,905 901.500,917 908.500,891 915.500,899 922.500,903 929.500,899 936.500,905 943.500,905 950.500,902 957.500,906 964.500,903 971.500,907 978.500,908 985.500,907 992.500,905 999.500,897 1006.500,904 1013.500,894 1020.500,902 1027.500,905 1034.500,905 1041.500,902 1048.500,903 1055.500,903 1062.500,904 1069.500,905 1076.500,896 1083.500,902 1090.500,908 1097.500,920 1104.500,903 1111.500,902 1118.500,907 1125.500,916 1132.500,870 1139.500,876 1146.500,897 1153.500,903 1160.500,908 1167.500,923 1174.500,896 1181.500,914 1188.500,897 1195.500,909 1202.500,899"/>
<polyline class="ln" stroke="#00d8f8" points="26,908 53,905 77,898 100,898 123,898 143,897 233,897 300,899 333,897 357,902 400,902 500,905 567,910 633,908 700,905 707,900 800,898 833,897 867,900 900,898 907,903 1000,905 1202,903"/>

<!-- annotation -->
<rect x="75.500" y="822.500" width="254" height="73" fill="none" stroke="#fff"/>
<text x="228" y="673" style="fill:#e83030;font-size:16px">股价下跌，以散户多为主</text>
<path d="M291.500 684L290 803l3.500-1L285 818l-8-16 4.500 1z" fill="url(#ar)"/>

<!-- watermark -->
<rect x="1085" y="919" width="32" height="33" rx="6" fill="#f04a26"/>
<circle cx="1101" cy="935" r="12" fill="none" stroke="#fff" stroke-width="2.500"/>
<text x="1101" y="941" text-anchor="middle" style="fill:#fff;font-size:14px;font-weight:bold">财</text>
<text x="1122" y="944" style="fill:#f05a28;font-size:25px;font-weight:bold" textLength="50" lengthAdjust="spacingAndGlyphs">财富</text>
<text x="1171" y="944" style="fill:#2a8cc4;font-size:25px;font-weight:bold">池</text>
<text x="1123" y="955" style="fill:#8a8a8a;font-size:12px;font-family:'Liberation Serif',serif" textLength="73">www.cfchi.com</text>
</svg>
</body></html>
